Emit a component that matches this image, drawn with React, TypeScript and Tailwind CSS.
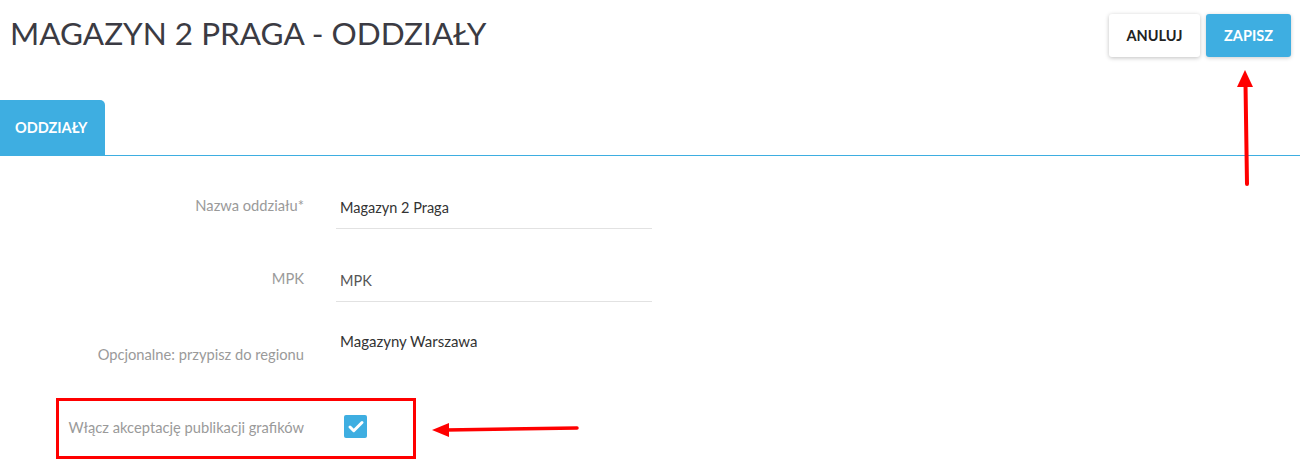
import React from 'react';
import { Check } from 'lucide-react';

const FieldRow: React.FC<{ label: string; value: string; muted?: boolean; className?: string }> = ({
  label,
  value,
  muted,
  className,
}) => (
  <div className={`flex items-end ${className ?? ''}`}>
    <div className="w-[305px] shrink-0 pr-[1px] pb-[13px] text-right text-[14.7px] text-[#9a9a9a]">{label}</div>
    <div
      className={`ml-[31px] flex h-[40px] w-[316px] items-center border-b border-[#e2e2e2] pb-[2px] pl-[4px] text-[14.5px] ${
        muted ? 'text-[#555]' : 'text-[#333]'
      }`}
    >
      {value}
    </div>
  </div>
);

export default function App() {
  return (
    <div className="relative h-[466px] w-[1300px] overflow-hidden bg-white font-['Lato','Liberation_Sans',sans-serif]">
      {/* header */}
      <div className="flex h-[100px] items-start justify-between">
        <h1 className="ml-[10px] mt-[10px] text-[31.5px] font-normal text-[#3b3b43]">MAGAZYN 2 PRAGA - ODDZIAŁY</h1>
        <div className="mr-[9px] mt-[14px] flex gap-[6px]">
          <button className="h-[43px] w-[91px] rounded-[3px] bg-white text-[14.5px] font-bold text-[#222] shadow-[0_1px_4px_rgba(0,0,0,0.25)]">
            ANULUJ
          </button>
          <button className="h-[43px] w-[85px] rounded-[3px] bg-[#3eaee1] text-[14.5px] font-bold text-white shadow-[0_1px_4px_rgba(0,0,0,0.2)]">
            ZAPISZ
          </button>
        </div>
      </div>

      {/* tabs */}
      <div className="flex h-[55px]">
        <div className="flex w-[105px] items-center rounded-tr-[5px] bg-[#3eaee1] pl-[15px] text-[14.5px] font-bold text-white">
          ODDZIAŁY
        </div>
      </div>
      <div className="h-px bg-[#3eaee1]" />

      {/* form */}
      <div className="pt-[33px]">
        <FieldRow label="Nazwa oddziału*" value="Magazyn 2 Praga" />
        <FieldRow label="MPK" value="MPK" muted className="mt-[33px]" />
        <div className="mt-[28px] flex items-start">
          <div className="w-[305px] shrink-0 pt-[13px] pr-[1px] text-right text-[14.7px] text-[#9a9a9a]">
            Opcjonalne: przypisz do regionu
          </div>
          <div className="ml-[35px] text-[15px] text-[#333]">Magazyny Warszawa</div>
        </div>
        <div className="mt-[50px] flex items-center">
          <div className="w-[305px] shrink-0 pr-[1px] text-right text-[14.7px] text-[#9a9a9a]">
            Włącz akceptację publikacji grafików
          </div>
          <div className="ml-[39px] flex h-[23px] w-[23px] items-center justify-center rounded-[2px] bg-[#3eaee1]">
            <Check className="h-[18px] w-[18px] text-white" strokeWidth={4} />
          </div>
        </div>
      </div>

      {/* annotations */}
      <div className="absolute left-[56px] top-[398px] h-[61px] w-[360px] border-[3px] border-[#ff0000]" />
      <svg className="absolute left-0 top-0" width="1300" height="466" viewBox="0 0 1300 466">
        <line x1="1245.5" y1="84" x2="1247" y2="184" stroke="#ff0000" strokeWidth="4" strokeLinecap="round" />
        <polygon points="1245,70 1253,87 1237,87" fill="#ff0000" />
        <line x1="446" y1="430" x2="577" y2="428" stroke="#ff0000" strokeWidth="3.5" strokeLinecap="round" />
        <polygon points="432,430 449,423 449,437" fill="#ff0000" />
      </svg>
    </div>
  );
}
